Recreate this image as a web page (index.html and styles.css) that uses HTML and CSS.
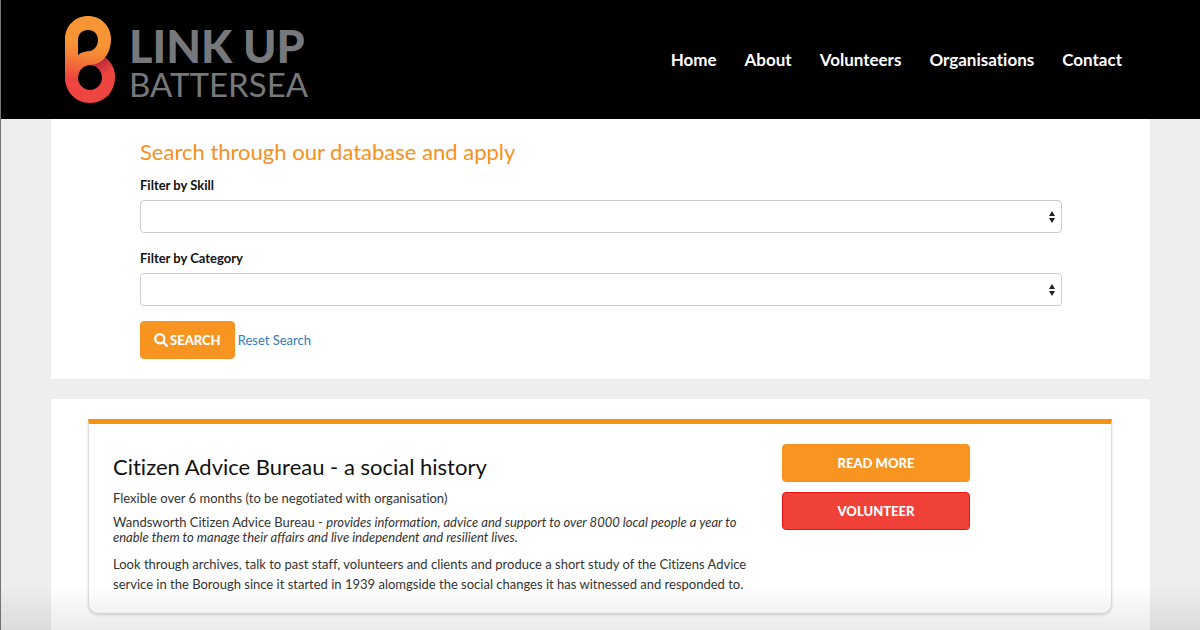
FILE: index.html
```html
<!DOCTYPE html>
<html lang="en">
<head>
<meta charset="utf-8">
<title>Link Up Battersea</title>
<link rel="stylesheet" href="styles.css">
</head>
<body>
<header class="site-header">
  <a class="brand" href="#">
    <svg class="brand-mark" viewBox="0 0 52 90" aria-hidden="true">
      <defs>
        <linearGradient id="strand" gradientUnits="userSpaceOnUse" x1="20" y1="28" x2="14" y2="64">
          <stop offset="0" stop-color="#f79433"/>
          <stop offset="0.4" stop-color="#f57f36"/>
          <stop offset="1" stop-color="#ef4540"/>
        </linearGradient>
        <linearGradient id="shade" gradientUnits="userSpaceOnUse" x1="36" y1="46" x2="44" y2="58">
          <stop offset="0" stop-color="#b9283a"/>
          <stop offset="1" stop-color="#ef4540"/>
        </linearGradient>
      </defs>
      <path fill="#ef4540" fill-rule="evenodd" d="M26 38C40 38 51 48 51 62.500C51 77 40 88 26 88S1 77 1 62.500C1 48 12 38 26 38ZM26 50A12 12.500 0 1 0 26 75A12 12.500 0 1 0 26 50Z"/>
      <path fill="url(#shade)" d="M26 50V38C40 38 51 48 51 62H38C38 55 33 50 26 50Z"/>
      <path fill="url(#strand)" fill-rule="evenodd" d="M1 63V24C1 11 11 1 24 1S47 11 47 24C47 38 39 50 25 50C18 51 14 56 14 63ZM14 40C18 37 22 36 26 36C31 35 34 30 34 25C34 19 30 15 24 15S14 19 14 25Z"/>
    </svg>
    <span class="brand-text">
      <span class="brand-top">LINK UP</span>
      <span class="brand-bottom">BATTERSEA</span>
    </span>
  </a>
  <nav class="site-nav">
    <a href="#">Home</a>
    <a href="#">About</a>
    <a href="#">Volunteers</a>
    <a href="#">Organisations</a>
    <a href="#">Contact</a>
  </nav>
</header>
<main class="page">
  <form class="panel search">
    <h1 class="search-title">Search through our database and apply</h1>
    <label class="field-label" for="skill">Filter by Skill</label>
    <div class="field">
      <select id="skill" class="field-select"><option></option></select>
      <svg class="field-arrows" viewBox="0 0 6 12" aria-hidden="true"><path d="M3 0L6 5H0ZM3 12L0 7H6Z"/></svg>
    </div>
    <label class="field-label" for="category">Filter by Category</label>
    <div class="field">
      <select id="category" class="field-select"><option></option></select>
      <svg class="field-arrows" viewBox="0 0 6 12" aria-hidden="true"><path d="M3 0L6 5H0ZM3 12L0 7H6Z"/></svg>
    </div>
    <div class="search-actions">
      <button class="btn btn-search" type="button">
        <svg class="btn-icon" viewBox="0 0 14 14" aria-hidden="true"><circle cx="5.8" cy="5.8" r="4.6"/><path d="M9.4 9.4L12.8 12.8"/></svg>
        SEARCH
      </button>
      <a class="reset" href="#">Reset Search</a>
    </div>
  </form>
  <section class="panel results">
    <article class="card">
      <div class="card-body">
        <h2 class="card-title">Citizen Advice Bureau - a social history</h2>
        <p class="card-time">Flexible over 6 months (to be negotiated with organisation)</p>
        <p class="card-org">Wandsworth Citizen Advice Bureau - <em>provides information, advice and support to over 8000 local people a year to enable them to manage their affairs and live independent and resilient lives.</em></p>
        <p class="card-desc">Look through archives, talk to past staff, volunteers and clients and produce a short study of the Citizens Advice service in the Borough since it started in 1939 alomgside the social changes it has witnessed and responded to.</p>
      </div>
      <div class="card-actions">
        <button class="btn" type="button">READ MORE</button>
        <button class="btn btn-red" type="button">VOLUNTEER</button>
      </div>
    </article>
  </section>
</main>
<div class="fade"></div>
</body>
</html>
```
FILE: styles.css
```css
* { box-sizing: border-box; }
html { background: #eee; }
body {
  margin: 0;
  min-height: 100vh;
  border-left: 1px solid #777;
  font-family: Lato, "Liberation Sans", sans-serif;
  font-size: 13px;
  line-height: 20px;
  font-variant-ligatures: none;
  color: #333;
  overflow: hidden;
}
h1, h2, p { margin: 0; font-weight: 400; }
.site-header {
  display: flex;
  justify-content: space-between;
  align-items: center;
  height: 119px;
  padding: 0 78px 0 63px;
  background: #000;
}
.brand { display: flex; gap: 13px; text-decoration: none; color: #77787b; }
.brand-mark { width: 52px; height: 90px; }
.brand-text { display: flex; flex-direction: column; padding-top: 9px; }
.brand-top { font-size: 45px; line-height: 44px; font-weight: 900; }
.brand-bottom { font-size: 33px; line-height: 32px; }
.site-nav { display: flex; gap: 28px; }
.site-nav a { color: #fff; font-size: 17px; font-weight: 700; text-decoration: none; }
.page { padding: 0 50px; }
.panel { background: #fff; }
.search { padding: 19px 88px 20px 89px; margin-bottom: 20px; }
.search-title { font-size: 22px; line-height: 28px; margin-bottom: 9px; color: #f7901e; }
.field-label { display: block; margin-bottom: 5px; font-weight: 700; color: #111; }
.field { position: relative; margin-bottom: 15px; }
.field-select {
  display: block;
  width: 100%;
  height: 33px;
  padding: 6px 12px;
  border: 1px solid #ccc;
  border-radius: 4px;
  background: #fff;
  appearance: none;
}
.field-arrows { position: absolute; right: 7px; top: 11px; width: 6px; height: 12px; fill: #222; }
.search-actions { display: flex; align-items: center; gap: 3px; }
.btn {
  height: 38px;
  padding: 0 13px;
  border: 1px solid #f7901e;
  border-radius: 4px;
  background: #f89521;
  color: #fff;
  font: 900 13px/20px Lato, "Liberation Sans", sans-serif;
}
.btn-search { display: flex; align-items: center; gap: 2px; }
.btn-icon { width: 14px; height: 14px; fill: none; stroke: #fff; stroke-width: 2.2; stroke-linecap: round; }
.btn-red { background: #f04238; border-color: #f01010; }
.reset { color: #337ab7; text-decoration: none; }
.results { padding: 20px 38px 20px 37px; min-height: 240px; }
.card {
  display: flex;
  gap: 29px;
  padding: 20px 24px 19px;
  border: 1px solid #ddd;
  border-top: 5px solid #f7930e;
  border-radius: 0 0 10px 10px;
  box-shadow: 0 1px 3px rgba(0, 0, 0, 0.15);
}
.card-body { flex: 0 1 640px; padding-top: 9px; }
.card-title { font-size: 22px; line-height: 28px; color: #111; margin-bottom: 7px; }
.card-time { margin-bottom: 7px; }
.card-org { line-height: 15px; margin-bottom: 9px; }
.card-actions { display: flex; flex-direction: column; gap: 10px; width: 188px; }
.fade {
  position: fixed;
  left: 0;
  right: 0;
  bottom: 0;
  height: 45px;
  background: linear-gradient(rgba(0, 0, 0, 0), rgba(0, 0, 0, 0.08));
}
```
